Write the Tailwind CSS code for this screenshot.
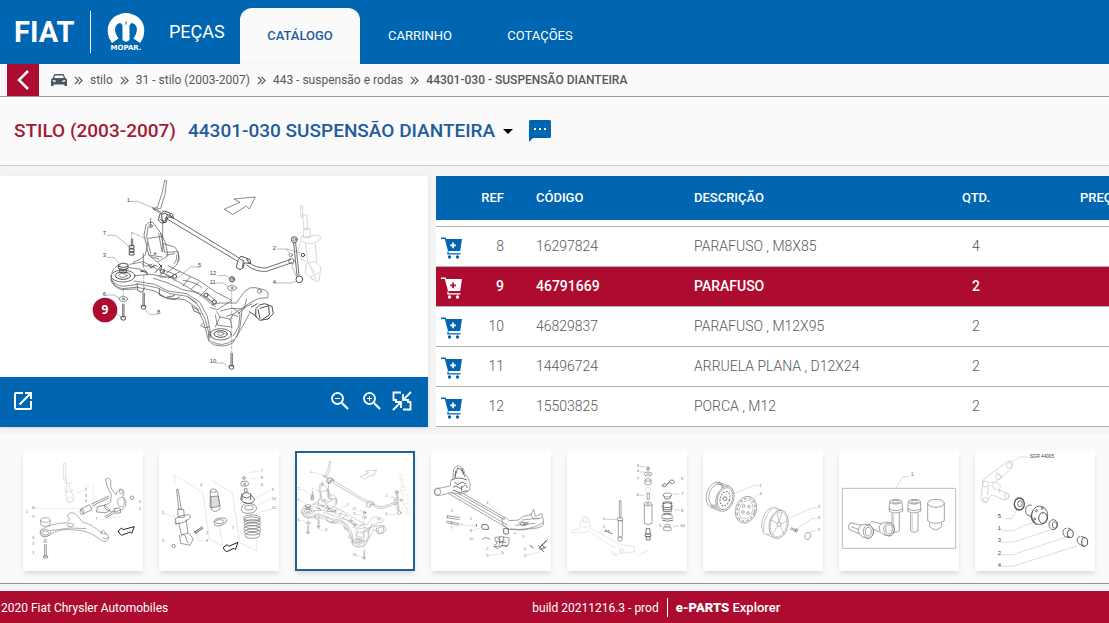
<!DOCTYPE html>
<html lang="pt-BR">
<head>
  <meta charset="UTF-8">
  <title>e-PARTS Explorer</title>
  <meta name="viewport" content="width=device-width, initial-scale=1.0">
  <script src="https://cdn.jsdelivr.net/npm/@tailwindcss/browser@4"></script>
</head>
<body class="flex min-h-screen flex-col overflow-x-hidden bg-[#f4f4f4] font-['Roboto',sans-serif] text-[#54595c]">

  <!-- shared symbols -->
  <svg class="hidden" aria-hidden="true">
    <symbol id="chevrons" viewBox="0 0 10 10">
      <path d="M1 1l4 4-4 4M5 1l4 4-4 4" fill="none" stroke="currentColor" stroke-width="1.3"/>
    </symbol>
    <symbol id="cart" viewBox="0 0 22 22">
      <path fill="currentColor" fill-rule="evenodd" d="M0 .5h4.600l.7 1.500H21l-1.800 12H7L3.800 2H0zM11.200 5.500v2H9.200v1.700h2v2h1.700v-2h2V7.500h-2v-2z"/>
      <path d="M7 14.500v2.300h12.500" fill="none" stroke="currentColor" stroke-width="1.3"/>
      <circle cx="8.500" cy="20" r="1.700" fill="currentColor"/>
      <circle cx="16.500" cy="20" r="1.700" fill="currentColor"/>
    </symbol>
    <symbol id="suspension" viewBox="0 0 780 615" overflow="visible">
      <g fill="none" stroke="#505050" stroke-width="2" stroke-linejoin="round" stroke-linecap="round">
        <!-- stabilizer bar -->
        <path d="M254 17l-8 38-14 42-14 4M260 18l-5 40-13 42-20 4M254 17q4-3 6 1M218 97l24 14M221 104l22 12"/>
        <path d="M262 118l214 130M256 129l214 128M506 262q22 18 52 17l74-26M500 270q28 22 60 19l76-26" stroke-width="2.500"/>
        <path d="M240 118l12-10 12 4 14 6 2 12-10-4-6 0-6 16-14 2-8-8zM246 118l10-4 6 6-6 18-8 0zM268 118l8 8M242 134l10 6" stroke-width="3"/>
        <path d="M474 256l8-12 14 4 14 6 2 12-12-2-8 0-2 14-10 6-10-6zM482 254l8 2-2 20M500 252l6 10" stroke-width="3"/>
        <circle cx="634" cy="258" r="8"/><circle cx="632" cy="240" r="5"/>
        <!-- link rod -->
        <path d="M641 204l10 98M647 204l10 96" stroke-width="2.500"/>
        <circle cx="643" cy="194" r="9" stroke-width="3"/><circle cx="643" cy="194" r="4"/>
        <circle cx="658" cy="313" r="10" stroke-width="3"/><circle cx="669" cy="240" r="5" stroke-width="3"/>
        <!-- arrow -->
        <path d="M434 102l46-20-18-10 64-6-18 36-9-9-40 25z"/>
        <!-- bracket tower -->
        <path d="M198 150q8-12 20-8l24 32 12 58 40-2q6 20-4 40l-30 24M198 150l-6 30 14 60 26 22 32-20-8-40-14-28M206 240l40 6M212 130v26M248 140v90M205 190l42-6M250 206l34 10q18 20 12 44"/>
        <path d="M204 156l-4 28 12 52M236 176l10 54M214 246l22 6M258 240l26-4M290 240q2 16-8 26"/>
        <circle cx="212" cy="153" r="5"/><circle cx="225" cy="236" r="3"/>
        <path d="M160 262q20-6 36-22l6-30 0-10M150 268l40-8 40 22M186 266l12 8 18-6M180 288l14-4 8 10M210 280l12-10 10 4M190 236v40"/>
        <path d="M184 290l12-2 6 8M206 272l8 6 10-6M236 266l10 10-8 10M226 292l20-22" stroke-width="3"/>
        <!-- left bushing -->
        <ellipse cx="129" cy="303" rx="36" ry="18" stroke-width="2.500"/>
        <ellipse cx="129" cy="302" rx="23" ry="11" stroke-width="3"/>
        <ellipse cx="129" cy="301" rx="12" ry="6"/>
        <path d="M93 303q0 30 34 38l40-4M96 316q12 16 34 18l44-6M96 292q6-18 24-22M146 278l34 4 22 16M165 302l48-4 44 8M92 312q4 22 32 32l44-2"/>
        <path d="M116 268q14-8 28 0v12q-14 8-28 0zM116 274q14 8 28 0M120 284q10 6 20 0v8q-10 4-20 0z" stroke-width="3"/>
        <!-- cradle -->
        <path d="M168 336l56 12 34 20 56 6 36 24 20 40 16 60M162 318l62 10 40 20 56 8 38 24 24 44 12 62M170 326l60 12 40 18 52 8 30 20M257 300l52 28 54 34 44 34"/>
        <path d="M220 310l44 14 44 20 50 10 36 26M324 366l30 24 22 44 14 54"/>
        <path d="M264 272l36 18 56 26 52 36 48 24-44 28-20-6M252 284l-14 20M300 290l-36 20M330 306l-20 26M356 322l-22 20M382 340l-22 24M310 316q36 4 56 22M240 306l38 0"/>
        <path d="M172 332v14l14 6 8-14M238 342v18l24 10 22 4 14-8M336 392l6 16 20 8M262 366l22-4M342 398l14 8" stroke-width="2.500"/>
        <circle cx="247" cy="289" r="6" stroke-width="3"/><circle cx="284" cy="304" r="6" stroke-width="3"/>
        <circle cx="378" cy="360" r="6" stroke-width="3"/><circle cx="403" cy="381" r="6" stroke-width="3"/>
        <path d="M250 284l30 12M250 294l30 14M382 356l22 18M380 366l20 18M395 390l24-6 50 0 26-36q14-14 32-10l30 8q10 6 6 22l-26 2-28 14-20 14-30 20-8 16"/>
        <circle cx="538" cy="349" r="6"/>
        <!-- right bushing -->
        <path d="M388 470q-10 30 16 40 30 8 54-6l14-24 18-30 18-34M370 444l-8 8 12 6 14-2M396 500q30 20 66-6M410 410l10 16 30 6 6 26M420 426l-14 30M422 408l32-8 32 2 30-16M440 424l14-6 20 6"/>
        <path d="M406 420l6 30 40 6M460 400l20 16-4 40-16 26M470 486l10-30 6-50M500 372l-8 30-18 14"/>
        <ellipse cx="422" cy="478" rx="32" ry="17" stroke-width="2.500"/>
        <ellipse cx="422" cy="477" rx="20" ry="10" stroke-width="3"/>
        <ellipse cx="422" cy="476" rx="10" ry="5"/>
        <path d="M528 400q10-14 26-14l22 8 4 22-16 16-24 4-12-10zM540 400l26-8 2 28-22 14M508 410l22 14M514 396l18-10M534 404l6 26" stroke-width="3"/>
        <!-- bolts and washers -->
        <path d="M154 192v20M158 192v20M128 387v38M132 387v38M189 355v38M193 355v38M453 535v38M457 535v38" stroke-width="2.500"/>
        <path d="M149 212h13v8h-13zM149 222h13v8h-13zM149 232h13v8h-13zM124 425h12v8l-6 3-6-3zM185 392h12v8l-6 3-6-3zM449 572h12v8l-6 3-6-3z" stroke-width="3"/>
        <ellipse cx="130" cy="372" rx="13" ry="7"/><ellipse cx="130" cy="372" rx="4" ry="2"/>
        <ellipse cx="456" cy="339" rx="13" ry="7"/><ellipse cx="456" cy="339" rx="3" ry="2"/>
        <circle cx="456" cy="313" r="8" stroke-width="3"/><circle cx="456" cy="312" r="4"/>
      </g>
      <g fill="none" stroke="#777" stroke-width="1.500">
        <path d="M150 79h22l48 20M80 181h26l42 34M80 247h22l14 16M78 360h24l16 9M110 414l14 14M196 404l12 14h26M358 276h-26l-52 44M414 302h24l10 6M408 324h22l14 10M408 564h22l18 14M592 222h28l8 12M620 222l42 12M588 324h46l16-6M640 264l-4 10 14 34"/>
        <path d="M130 340v24M155 172v20M155 172l44 20M191 300v54M455 346v188" stroke-dasharray="12 3"/>
      </g>
      <!-- strut -->
      <g fill="none" stroke="#c4c4c4" stroke-width="2">
        <path d="M662 92h6v34h-6zM668 120l4 44h12l-4-44zM670 160h20v28h-20zM662 196q30 24 62-6-6-16-32-6l-28 0zM676 206l8 58 26-4-4-54M680 264l-4 30 30 26 12-4 4-40-14-14M692 278l10 22 14-8M684 262l20 30M662 200l-8 24 10 30 14 4"/>
        <circle cx="700" cy="308" r="6"/>
      </g>
      <g fill="#3d3d3d" font-family="Liberation Sans" font-size="18">
        <text x="140" y="82">1</text><text x="68" y="181">7</text><text x="68" y="247">3</text><text x="68" y="362">6</text>
        <text x="231" y="418">8</text><text x="354" y="277">5</text><text x="389" y="300">12</text><text x="389" y="328">11</text>
        <text x="389" y="565">10</text><text x="578" y="224">2</text><text x="578" y="327">4</text>
      </g>
    </symbol>
  </svg>

  <header class="flex h-16 shrink-0 items-end bg-[#0066b1] text-white">
    <div class="flex w-60 shrink-0 items-center self-stretch pl-[14px]">
      <span class="w-[60px] text-[29px] leading-none font-bold">FIAT</span>
      <span class="ml-4 h-[42px] w-px bg-white"></span>
      <svg class="ml-4 h-[42px] w-[38px]" viewBox="0 0 38 42" role="img" aria-label="Mopar">
        <path fill="#fff" d="M5 32L2 27Q-2 14 6.500 6.500q12.500-9 25 0Q40 14 36 27l-3 5-6.500-4.500q6-9 1.500-14-4-3.500-5.500 1V29L19 31l-3.500-2V14.500q-1.500-4.500-5.500-1-4.500 5 1.500 14z"/>
        <path d="M19 10.500v3" stroke="#0066b1"/>
        <text x="19" y="39" text-anchor="middle" fill="#fff" font-family="DejaVu Sans" font-weight="700" font-size="7">MOPAR.</text>
      </svg>
      <span class="ml-6 text-lg">PEÇAS</span>
    </div>
    <nav class="flex h-14 text-center text-[13px] leading-[56px]">
      <a href="#" class="w-[120px] rounded-t-xl bg-[#fafafa] font-medium text-[#1f5c9e]">CATÁLOGO</a>
      <a href="#" class="w-[120px]">CARRINHO</a>
      <a href="#" class="w-[120px]">COTAÇÕES</a>
    </nav>
  </header>

  <nav class="flex h-[33px] shrink-0 items-center border-b border-[#999] bg-[#fafafa] pl-[7px] text-xs whitespace-nowrap shadow-sm" aria-label="Caminho">
    <button class="grid size-8 place-items-center bg-[#ad0c30]" aria-label="Voltar">
      <svg class="h-5 w-3 text-white" viewBox="0 0 12 20"><path d="M11 1L2 10l9 9" fill="none" stroke="currentColor" stroke-width="2.500"/></svg>
    </button>
    <a href="#" class="ml-3" aria-label="Início">
      <svg class="h-3 w-4" viewBox="0 0 16 12"><path fill="#4b5563" fill-rule="evenodd" d="M3 .8Q3.300 0 4 0h8q.7 0 1 .8L14.200 4Q16 4.300 16 6v6h-2.500v-1.500h-11V12H0V6q0-1.700 1.800-2zM4 1.500L3.200 4h9.600L12 1.500zM1.500 6l.5 1.500 3 .5-.5-1.500zM14.500 6l-3 .5L11 8l3-.5z"/></svg>
    </a>
    <svg class="mx-[7px] size-[9px]"><use href="#chevrons"/></svg>
    <a href="#">stilo</a>
    <svg class="mx-[7px] size-[9px]"><use href="#chevrons"/></svg>
    <a href="#">31 - stilo (2003-2007)</a>
    <svg class="mx-[7px] size-[9px]"><use href="#chevrons"/></svg>
    <a href="#">443 - suspensão e rodas</a>
    <svg class="mx-[7px] size-[9px]"><use href="#chevrons"/></svg>
    <span class="font-medium">44301-030 - SUSPENSÃO DIANTEIRA</span>
  </nav>

  <div class="flex h-[69px] shrink-0 items-center border-b border-[#c5d0dc] bg-[#fafafa] pl-[14px] text-[19px] font-medium whitespace-nowrap">
    <h1 class="text-[#a31a35]">STILO (2003-2007)</h1>
    <button class="ml-3 flex items-center text-[#1f5c9e]">
      44301-030 SUSPENSÃO DIANTEIRA
      <svg class="ml-2 h-[5px] w-[10px]" viewBox="0 0 10 5"><path d="M0 0h10L5 5z" fill="#000"/></svg>
    </button>
    <button class="ml-4" aria-label="Comentários">
      <svg class="h-[22px] w-[22px]" viewBox="0 0 22 22"><path fill="#0066b1" d="M1.500 0h19Q22 0 22 1.500v15q0 1.500-1.500 1.500H4l-4 4V1.500Q0 0 1.500 0z"/><path fill="#fff" d="M5 8h2v2H5zM10 8h2v2h-2zM15 8h2v2h-2z"/></svg>
    </button>
  </div>

  <main class="grid grid-cols-[428fr_673fr] gap-2 pt-[10px] pb-[7px]">
    <section class="flex h-[251px] flex-col bg-white shadow-sm">
      <svg class="h-[201px] w-full" viewBox="-240 3 1284 603" role="img" aria-label="Suspensão dianteira">
        <use href="#suspension" width="780" height="615"/>
        <circle cx="75" cy="405" r="37" fill="#ad0c30"/>
        <text x="75" y="418" text-anchor="middle" fill="#fff" font-family="Open Sans" font-weight="700" font-size="36">9</text>
      </svg>
      <div class="flex h-[50px] items-center bg-[#0066b1] pr-4 pb-[2px] pl-[14px] text-white">
        <button aria-label="Abrir">
          <svg class="size-[18px]" viewBox="0 0 18 18"><path fill="currentColor" d="M16 16H2V2h7V0H2Q0 0 0 2v14q0 2 2 2h14q2 0 2-2V9h-2zM11 0v2h3.600l-9.800 9.800 1.400 1.400L16 3.400V7h2V0z"/></svg>
        </button>
        <button class="ml-auto" aria-label="Diminuir zoom">
          <svg class="size-[18px]" viewBox="0 0 18 18" fill="none" stroke="currentColor"><circle cx="6.500" cy="6.500" r="5.500" stroke-width="1.900"/><path d="M11 11l6 6" stroke-width="2.200"/><path d="M4 6.500h5"/></svg>
        </button>
        <button class="ml-[14px]" aria-label="Aumentar zoom">
          <svg class="size-[18px]" viewBox="0 0 18 18" fill="none" stroke="currentColor"><circle cx="6.500" cy="6.500" r="5.500" stroke-width="1.900"/><path d="M11 11l6 6" stroke-width="2.200"/><path d="M4 6.500h5M6.500 4v5"/></svg>
        </button>
        <button class="ml-[11px]" aria-label="Ajustar">
          <svg class="size-5" viewBox="0 0 20 20" fill="none" stroke="currentColor" stroke-width="1.800"><path d="M9 1.500H1.500V9H5M11 18.500h7.500V11H15M19 1l-7 7M11 3v6h6M1 19l7-7M3 11h6v6"/></svg>
        </button>
      </div>
    </section>

    <section class="h-[251px] overflow-hidden bg-white">
      <table class="w-full min-w-[760px] table-fixed text-sm">
        <colgroup>
          <col class="w-8"><col class="w-[52px]"><col class="w-[158px]"><col class="w-[266px]"><col class="w-16"><col>
        </colgroup>
        <thead class="bg-[#0066b1] text-[13px] text-white">
          <tr class="h-11">
            <th></th>
            <th class="pr-4 text-right font-medium">REF</th>
            <th class="pl-4 text-left font-medium">CÓDIGO</th>
            <th class="pl-4 text-left font-medium">DESCRIÇÃO</th>
            <th class="font-medium">QTD.</th>
            <th class="pl-[72px] text-left font-medium">PREÇO</th>
          </tr>
        </thead>
        <tbody class="font-light">
          <tr class="h-[6px] border-b border-[#b0b3b5]"><td colspan="6"></td></tr>
          <tr class="h-10 border-b border-[#b0b3b5]">
            <td class="pt-[3px] pl-[5px] text-[#0066b1]"><button class="block" aria-label="Adicionar"><svg class="size-[22px]"><use href="#cart"/></svg></button></td>
            <td class="pr-4 text-right">8</td><td class="pl-4">16297824</td><td class="pl-4">PARAFUSO , M8X85</td><td class="text-center">4</td><td></td>
          </tr>
          <tr class="h-10 border-b border-[#b0b3b5] bg-[#ad0c30] font-medium text-white">
            <td class="pt-[3px] pl-[5px]"><button class="block" aria-label="Adicionar"><svg class="size-[22px]"><use href="#cart"/></svg></button></td>
            <td class="pr-4 text-right">9</td><td class="pl-4">46791669</td><td class="pl-4">PARAFUSO</td><td class="text-center">2</td><td></td>
          </tr>
          <tr class="h-10 border-b border-[#b0b3b5]">
            <td class="pt-[3px] pl-[5px] text-[#0066b1]"><button class="block" aria-label="Adicionar"><svg class="size-[22px]"><use href="#cart"/></svg></button></td>
            <td class="pr-4 text-right">10</td><td class="pl-4">46829837</td><td class="pl-4">PARAFUSO , M12X95</td><td class="text-center">2</td><td></td>
          </tr>
          <tr class="h-10 border-b border-[#b0b3b5]">
            <td class="pt-[3px] pl-[5px] text-[#0066b1]"><button class="block" aria-label="Adicionar"><svg class="size-[22px]"><use href="#cart"/></svg></button></td>
            <td class="pr-4 text-right">11</td><td class="pl-4">14496724</td><td class="pl-4">ARRUELA PLANA , D12X24</td><td class="text-center">2</td><td></td>
          </tr>
          <tr class="h-10 border-b border-[#b0b3b5]">
            <td class="pt-[3px] pl-[5px] text-[#0066b1]"><button class="block" aria-label="Adicionar"><svg class="size-[22px]"><use href="#cart"/></svg></button></td>
            <td class="pr-4 text-right">12</td><td class="pl-4">15503825</td><td class="pl-4">PORCA , M12</td><td class="text-center">2</td><td></td>
          </tr>
        </tbody>
      </table>
    </section>
  </main>

  <section class="flex h-[150px] shrink-0 gap-4 overflow-hidden border-b border-[#8f9396] bg-[#fafafa] pt-[17px] pl-[23px]">
    <!-- 1: control arm -->
    <button class="size-[120px] shrink-0 bg-white shadow-md">
      <svg viewBox="39 33 360 360" fill="none" stroke="#888" stroke-width="2" role="img" aria-label="Braço oscilante">
        <g stroke="#d5d5d5"><path d="M160 70v50h7V70zM168 110l4 50M160 124q14 14 28 0M164 140l6 40q12 14 24-2l-10-22-8-26M168 156l24-4"/><circle cx="180" cy="180" r="9"/></g>
        <path d="M60 205h160M200 160l40-24M250 130v60M262 240l70-10" stroke="#e5e5e5"/>
        <ellipse cx="106" cy="240" rx="14" ry="7"/><path d="M92 240v14q14 10 28 0v-14"/>
        <ellipse cx="106" cy="279" rx="16" ry="10"/><ellipse cx="106" cy="279" rx="10" ry="6"/>
        <path d="M92 270q30-20 80-22l8-10q-14-10-2-18 16-6 26 10l14 16q30 8 52 30l24 8q6 16-8 20-14 0-18-8-36-26-72-26-50-6-76 14-20 14-28 0zM120 272l60-8 50 2"/><ellipse cx="181" cy="255" rx="10" ry="5"/>
        <path d="M274 284v-10q8-6 12 2v8M278 294q10 6 16-2"/>
        <path d="M101 300h10M100 306h12M104 312v36h5v-36M100 348h13v6h-13z" stroke="#666"/>
        <path d="M286 118q10-8 16 2v20l6 12 10 12q8-24 20-14 8 10 0 20 14 12 8 28-10 16-26 16l-16 0q-24-4-20-20 10 0 18-8l2-22-10-20z" stroke="#777"/>
        <ellipse cx="333" cy="186" rx="10" ry="14"/><circle cx="366" cy="173" r="5" stroke="#666"/><circle cx="334" cy="155" r="6"/>
        <path d="M296 168l-52 24M298 173l-52 25M212 208l26-14 8 14-26 14zM262 200l22-4 16 14-12 8-28-2zM284 230l24-14M287 234l24-14M312 206l18-2 2 14-18 2z" stroke="#666"/><ellipse cx="216" cy="216" rx="6" ry="8"/>
        <path d="M325 272l10-8 4 5 34-9-8 20-4-4-26 10-8-7z" stroke="#222" stroke-width="3"/>
        <g fill="#777" stroke="none" font-family="Liberation Sans" font-size="12"><text x="47" y="219">1</text><text x="67" y="207">8</text><text x="67" y="233">9</text><text x="67" y="296">6</text><text x="67" y="316">5</text><text x="67" y="342">5</text><text x="224" y="154">2</text><text x="224" y="170">3</text><text x="224" y="187">4</text><text x="256" y="240">7</text><text x="386" y="190">3</text><text x="386" y="211">2</text></g>
      </svg>
    </button>
    <!-- 2: front strut -->
    <button class="size-[120px] shrink-0 bg-white shadow-md">
      <svg viewBox="447 33 360 360" fill="none" stroke="#666" stroke-width="2" role="img" aria-label="Amortecedor dianteiro">
        <g stroke="#ddd"><path d="M494 105l84 52 20 140 40 20-10-60M494 105v30M605 122l62 36 22 150 50 24v-34M456 220l40 10M716 98l30-4M724 116l22 0M734 176l44-24M740 196l44-20M752 216l36-10M560 270l6 32 18 2"/></g>
        <path d="M500 148l6 60h8l-10-60zM503 208l2 24h18l-2-24zM496 236q16-12 40-12 12 6-4 16-20 14-34 10zM506 246l8 38 20-4-6-42M508 284l4 26 28 6 10-20-16-18M512 290q12-14 16 4t8 14M494 246l6 10"/>
        <path d="M554 276l24-16M556 280l24-16M552 272l6 10" stroke-width="3"/><circle cx="491" cy="318" r="5"/>
        <ellipse cx="610" cy="152" rx="9" ry="5"/><path d="M601 152v14l-1 32q4 16 16 16 14-2 14-12l-6-40-4-10"/><path d="M602 170l22-2 6 30-26 6z" fill="#ddd"/>
        <path d="M612 248q0-14 24-14 14 0 14 8-4 14-28 16-10 0-10-10z"/><ellipse cx="629" cy="245" rx="13" ry="6"/>
        <circle cx="702" cy="114" r="4"/><ellipse cx="704" cy="131" rx="12" ry="8"/><circle cx="704" cy="132" r="3"/><path d="M703 146h8v10h-8z"/>
        <path d="M696 164q14-12 26 0l12 14q-6 14-22 12t-20-12zM698 170q12 8 22 0M696 160v20M722 160v20" stroke-width="3"/>
        <path d="M694 206q4-18 24-16t22 16q-4 14-26 14t-20-14z"/><ellipse cx="717" cy="203" rx="13" ry="7"/>
        <g><ellipse cx="726" cy="234" rx="25" ry="9"/><ellipse cx="726" cy="240" rx="24" ry="9"/><ellipse cx="727" cy="248" rx="25" ry="9"/><ellipse cx="727" cy="257" rx="24" ry="9"/><ellipse cx="727" cy="266" rx="25" ry="9"/><ellipse cx="727" cy="276" rx="24" ry="9"/><ellipse cx="727" cy="286" rx="22" ry="9"/></g>
        <path d="M640 322l12-8 4 5 28-12-8 22-4-4-22 10-8-6z" stroke="#222" stroke-width="3"/>
        <g fill="#777" stroke="none" font-family="Liberation Sans" font-size="12"><text x="455" y="221">1</text><text x="455" y="307">3</text><text x="570" y="138">4</text><text x="588" y="281">2</text><text x="588" y="306">8</text><text x="665" y="268">7</text><text x="752" y="97">7</text><text x="752" y="117">8</text><text x="752" y="138">6</text><text x="785" y="154">9</text><text x="785" y="181">10</text><text x="785" y="208">12</text></g>
      </svg>
    </button>
    <!-- 3: current assembly -->
    <button class="size-[120px] shrink-0 border-2 border-[#1f6296] bg-white shadow-md" aria-current="true">
      <svg viewBox="6 6 348 348" class="opacity-70" role="img" aria-label="Suspensão dianteira">
        <g transform="translate(-28 23) scale(.518)"><use href="#suspension" width="780" height="615"/></g>
      </svg>
    </button>
    <!-- 4: rear axle -->
    <button class="size-[120px] shrink-0 bg-white shadow-md">
      <svg viewBox="438 33 360 360" fill="none" stroke="#777" stroke-width="2" role="img" aria-label="Eixo traseiro">
        <path d="M448 150q6-8 18-6l30-6q-2-16 8-24l2-26q6-14 18-10 14 6 14 22l10 12q12 20 6 38-10 12-28 12l-30-4-30 8q-14 4-18-6z"/><ellipse cx="458" cy="155" rx="9" ry="10"/>
        <path d="M510 110l8-26 10 4 12 22M512 92l-2 22M530 84l6 18M500 120q20-12 46 0M504 142q10-8 16 0t14-2 14 4M504 150l20 8 24-6M530 138v14M508 126l10 8 14-8 12 6" stroke="#555" stroke-width="2.500"/>
        <path d="M490 160l180 106M498 156l170 100M520 160l140 80M536 162l126 72"/>
        <path d="M650 236l12-4 10 10 30-2 10-10 26-6 8-16 6 22 18-10 6 26q2 14-20 18l-50 6-36-2-16-14zM700 250l10-6 10 12 12-12M736 220l8 16 20 0M710 240l60-6M676 266q50 10 100-18M690 256l60-6"/>
        <ellipse cx="714" cy="252" rx="8" ry="5"/><ellipse cx="724" cy="251" rx="5" ry="4"/>
        <path d="M486 227l40 6M484 233l40 6M484 243l40 8M484 248l38 8M488 226l0 8M500 244v9M528 250l4 6"/>
        <path d="M592 254h14q6 4 4 14h-16q-8-6-2-14zM656 266h14v14q-6 6-14 0zM574 252v8M690 278v4" stroke="#555" stroke-width="2.500"/>
        <path d="M630 292l20-2 22 4 0 14-6 12-14-4-14 10-12-8 10-8-6-10zM640 294l6 14 14-8M626 320l44-4M634 304l30 4M644 290v24M656 290l-4 26M592 300q6-12 14-6l10 4M650 334l6 8" stroke="#666"/>
        <path d="M762 326l8-10 18-18M764 330l20-10M760 316l16 20M734 316l12 8M770 312l10 14M766 320l20-18" stroke="#555" stroke-width="2.500"/>
        <path d="M606 188l40 30M530 254l44 4M556 272l30-8M610 346l40-4M722 346l40-10" stroke="#ddd"/>
        <g fill="#888" stroke="none" font-family="Liberation Sans" font-size="12"><text x="498" y="216">6</text><text x="604" y="191">1</text><text x="496" y="266">7</text><text x="554" y="241">5</text><text x="554" y="276">8</text><text x="552" y="300">10</text><text x="604" y="330">2</text><text x="604" y="351">3</text><text x="712" y="294">9</text><text x="716" y="330">4</text><text x="716" y="352">3</text></g>
      </svg>
    </button>
    <!-- 5: rear damper -->
    <button class="size-[120px] shrink-0 bg-white shadow-md">
      <svg viewBox="36 33 360 360" fill="none" stroke="#777" stroke-width="2" role="img" aria-label="Amortecedor traseiro">
        <g stroke="#ddd"><path d="M48 272l26-6 6-30q12-18 20 0l8 28-10 12-46 2zM82 262l22-2M84 240l12 10M104 276l80 50M112 268l80 44 46 8v16l-60 6-10-10M170 340l16 10M190 316l8 24M280 332l-26 12"/><circle cx="90" cy="240" r="8"/><circle cx="200" cy="332" r="5"/><ellipse cx="279" cy="148" rx="8" ry="7"/></g>
        <path d="M193 182h5v50h-5zM188 234h15v8h-15zM190 242v48q6 6 12 0v-48z"/><circle cx="195" cy="297" r="7"/>
        <path d="M152 272l20 10M154 268l-4 8M158 276l4-6" stroke-width="3"/>
        <path d="M276 82h6v8h-6z" stroke="#555"/><ellipse cx="279" cy="102" rx="12" ry="6"/><path d="M274 102h12"/>
        <ellipse cx="279" cy="120" rx="9" ry="4"/><path d="M270 120v12q9 6 18 0v-12M276 160h7v18h-7z"/>
        <path d="M268 192v58q11 8 23 0v-58"/><ellipse cx="279" cy="192" rx="12" ry="6"/><circle cx="279" cy="192" r="3"/>
        <path d="M273 266h12v16h-12zM271 282h16v8h-16zM274 290h11v10h-11z" stroke="#666" stroke-width="2.500"/>
        <path d="M323 134q6-6 12 0l12-14q8-2 12 6l-6 6-10-6-12 14-10-2z" stroke="#666" stroke-width="2.500"/>
        <ellipse cx="337" cy="165" rx="13" ry="6"/><path d="M324 165q6 8 6 12h14q0-6 6-12" stroke="#555"/>
        <path d="M321 192q16-8 32 0M319 198q16 10 36 0M321 206q16 8 32 0M325 186h24v28h-24zM319 226q16-8 34 0M319 232q16 10 36 0M321 240q16 8 34 0M325 220h24" stroke="#666" stroke-width="2.500"/>
        <ellipse cx="337" cy="257" rx="9" ry="4"/><path d="M326 262q10-4 22 0v8q-10 6-22 0z"/>
        <path d="M254 80h16M254 96h14M358 210h16M352 162h20M352 258h20M150 238h36M254 166h14" stroke="#bbb"/>
        <g fill="#666" stroke="none" font-family="Liberation Sans" font-size="12"><text x="245" y="82">3</text><text x="245" y="97">4</text><text x="245" y="119">7</text><text x="245" y="169">6</text><text x="143" y="240">1</text><text x="143" y="264">2</text><text x="312" y="260">5</text><text x="378" y="121">9</text><text x="378" y="166">7</text><text x="378" y="216">8</text><text x="376" y="262">10</text></g>
      </svg>
    </button>
    <!-- 6: wheels -->
    <button class="size-[120px] shrink-0 bg-white shadow-md">
      <svg viewBox="444 33 360 360" fill="none" stroke="#888" stroke-width="2" role="img" aria-label="Rodas">
        <ellipse cx="480" cy="164" rx="25" ry="39" transform="rotate(18 480 164)"/><ellipse cx="483" cy="164" rx="20" ry="33" transform="rotate(18 483 164)"/>
        <path d="M490 126l32 12M468 202l28 12M484 128l24 10M466 194l20 12"/>
        <ellipse cx="510" cy="176" rx="26" ry="39" transform="rotate(18 510 176)" fill="#fff"/><ellipse cx="510" cy="176" rx="22" ry="34" transform="rotate(18 510 176)"/>
        <ellipse cx="510" cy="176" rx="14" ry="22" transform="rotate(18 510 176)" stroke-width="4" stroke-dasharray="5 4"/><circle cx="510" cy="176" r="6" stroke-width="3"/>
        <ellipse cx="573" cy="209" rx="31" ry="41" transform="rotate(18 573 209)"/><ellipse cx="573" cy="209" rx="26" ry="35" transform="rotate(18 573 209)" stroke="#aaa" stroke-width="4" stroke-dasharray="9 5"/><ellipse cx="573" cy="209" rx="20" ry="28" transform="rotate(18 573 209)" stroke="#bbb"/>
        <circle cx="566" cy="198" r="4"/><circle cx="582" cy="200" r="4"/><circle cx="564" cy="216" r="4"/><circle cx="579" cy="219" r="4"/>
        <ellipse cx="646" cy="243" rx="24" ry="42" transform="rotate(18 646 243)" stroke="#aaa"/><path d="M660 203l24 8M634 283l26 12M652 204q-30 30-26 74" stroke="#aaa"/>
        <ellipse cx="671" cy="253" rx="28" ry="43" transform="rotate(12 671 253)" fill="#fff"/><ellipse cx="671" cy="253" rx="24" ry="38" transform="rotate(12 671 253)" stroke="#bbb"/>
        <circle cx="672" cy="253" r="6"/><path d="M672 246l8-30M678 252l18-10M676 258l12 26M668 258l-16 26M666 250l-18-10M672 246l-6-28" stroke="#aaa"/>
        <path d="M711 264l14 6M709 268l14 6M709 262l-2 8M724 266l4 2-2 8-6-2z" stroke="#666"/><ellipse cx="758" cy="288" rx="9" ry="11" transform="rotate(18 758 288)"/>
        <path d="M538 160l60-24h14M596 176l14-14M706 234l64-30h16M730 262l42-26h14M764 276l20-4" stroke="#ccc"/>
        <g fill="#777" stroke="none" font-family="Liberation Sans" font-size="13"><text x="613" y="140">1</text><text x="613" y="166">4</text><text x="788" y="205">2</text><text x="788" y="237">3</text><text x="788" y="274">5</text></g>
      </svg>
    </button>
    <!-- 7: wheel bolts -->
    <button class="size-[120px] shrink-0 bg-white shadow-md">
      <svg viewBox="30 33 360 360" fill="none" stroke="#777" stroke-width="2" role="img" aria-label="Parafusos de roda">
        <path d="M40 145h340v180H40z" stroke="#bbb" stroke-width="3"/><path d="M201 144l20-34h22" stroke="#ccc"/>
        <text x="246" y="109" fill="#666" stroke="none" font-family="Liberation Sans" font-size="14">1</text>
        <path d="M98 256l-34-8q-8 6-4 20l32 14M66 260l28 10M158 252l-30-8q-8 4-6 14M124 264l28 12"/>
        <ellipse cx="200" cy="185" rx="18" ry="7"/><ellipse cx="200" cy="185" rx="11" ry="4"/><path d="M182 185l-2 28q18 12 42 0l-4-28M180 206q20 12 42 0M189 220v52q10 10 22 0v-52"/>
        <ellipse cx="256" cy="185" rx="18" ry="7"/><ellipse cx="256" cy="185" rx="11" ry="4"/><path d="M238 185l-2 28q18 12 40 0l-2-28M236 206q20 12 40 0M245 220v52q10 10 22 0v-52"/>
        <path d="M194 224v48M250 224v48" stroke="#bbb"/>
        <ellipse cx="321" cy="190" rx="25" ry="12"/><path d="M296 190v52q24 16 50 0v-52M302 248v12q18 18 36 0v-12"/>
        <path fill="#fff" d="M96 255l18-2q18 4 20 22-2 18-16 20l-16-4q-14-8-14-20 2-12 8-16z"/><ellipse cx="118" cy="275" rx="15" ry="20"/><ellipse cx="118" cy="275" rx="9" ry="13"/>
        <path fill="#fff" d="M158 250l18-4q18 4 20 22-2 18-16 20l-16-4q-14-8-14-20 2-10 8-14z"/><ellipse cx="180" cy="268" rx="16" ry="20"/><ellipse cx="180" cy="268" rx="10" ry="14"/>
      </svg>
    </button>
    <!-- 8: rear hub -->
    <button class="size-[120px] shrink-0 bg-white shadow-md">
      <svg viewBox="438 33 360 360" fill="none" stroke="#555" stroke-width="2.500" role="img" aria-label="Cubo traseiro">
        <g stroke="#ccc"><path d="M462 120l66-50q6-10 18-6 10 14-4 26l-54 46 8 10 36 12q12 10 2 20-8 6-18-2l-26-12-16 16q-10 14-18-4zM484 128q20-6 30 10l-4 22M478 140l-2 24M500 96l20 20"/><circle cx="540" cy="76" r="8"/><circle cx="508" cy="110" r="8"/><circle cx="470" cy="132" r="9"/><circle cx="470" cy="180" r="8"/><ellipse cx="533" cy="168" rx="7" ry="9"/></g>
        <path d="M546 68l26-17h26M530 236h18l16-28M518 272h34l60-26M518 306h34l114-36M518 344h34l158-52M518 379h34l194-62" stroke="#bbb" stroke-width="1.500"/>
        <ellipse cx="571" cy="192" rx="15" ry="18" stroke-width="4"/><ellipse cx="573" cy="191" rx="7" ry="9"/>
        <path d="M608 196q-14-4-18 10-2 12 4 18l12 6"/><ellipse cx="632" cy="226" rx="24" ry="28"/><path d="M612 212q-14 22 8 38M606 224q0 24 18 30"/><ellipse cx="642" cy="234" rx="13" ry="16" stroke="#333"/><circle cx="640" cy="205" r="3"/><circle cx="622" cy="212" r="3"/><circle cx="617" cy="237" r="3"/>
        <ellipse cx="673" cy="254" rx="13" ry="15"/><ellipse cx="677" cy="255" rx="7" ry="10"/>
        <path d="M712 265q-12 2-10 16 4 12 18 10M716 264l10 4M714 292l10 0"/><ellipse cx="724" cy="281" rx="9" ry="12" stroke="#333"/>
        <path d="M754 289q-12 4-9 16 6 12 18 12M756 289l12 4M758 317l8 2"/><ellipse cx="767" cy="306" rx="9" ry="13" stroke="#333"/>
        <g fill="#444" stroke="none" font-family="Liberation Sans" font-size="18"><text x="506" y="234">5</text><text x="506" y="271">1</text><text x="506" y="307">3</text><text x="506" y="344">2</text><text x="506" y="380">4</text><text x="602" y="53" font-size="14">SGR 44005</text></g>
      </svg>
    </button>
  </section>

  <footer class="mt-auto flex h-8 shrink-0 items-center bg-[#ad0c30] pt-px text-xs text-white">
    <span class="w-[48%] pl-px">2020 Fiat Chrysler Automobiles</span>
    <span>build 20211216.3 - prod</span>
    <span class="mx-2 h-[19px] w-px bg-white"></span>
    <span class="text-[13px]"><b class="font-black">e-PARTS</b> <span class="font-medium">Explorer</span></span>
  </footer>
</body>
</html>
